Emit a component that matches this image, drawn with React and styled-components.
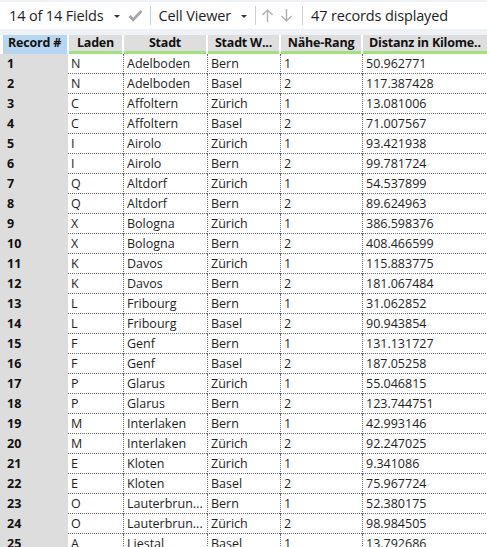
import React from "react";
import styled, { createGlobalStyle } from "styled-components";

const rows = [
  ["1", "N", "Adelboden", "Bern", "1", "50.962771"],
  ["2", "N", "Adelboden", "Basel", "2", "117.387428"],
  ["3", "C", "Affoltern", "Zürich", "1", "13.081006"],
  ["4", "C", "Affoltern", "Basel", "2", "71.007567"],
  ["5", "I", "Airolo", "Zürich", "1", "93.421938"],
  ["6", "I", "Airolo", "Bern", "2", "99.781724"],
  ["7", "Q", "Altdorf", "Zürich", "1", "54.537899"],
  ["8", "Q", "Altdorf", "Bern", "2", "89.624963"],
  ["9", "X", "Bologna", "Zürich", "1", "386.598376"],
  ["10", "X", "Bologna", "Bern", "2", "408.466599"],
  ["11", "K", "Davos", "Zürich", "1", "115.883775"],
  ["12", "K", "Davos", "Bern", "2", "181.067484"],
  ["13", "L", "Fribourg", "Bern", "1", "31.062852"],
  ["14", "L", "Fribourg", "Basel", "2", "90.943854"],
  ["15", "F", "Genf", "Bern", "1", "131.131727"],
  ["16", "F", "Genf", "Basel", "2", "187.05258"],
  ["17", "P", "Glarus", "Zürich", "1", "55.046815"],
  ["18", "P", "Glarus", "Bern", "2", "123.744751"],
  ["19", "M", "Interlaken", "Bern", "1", "42.993146"],
  ["20", "M", "Interlaken", "Zürich", "2", "92.247025"],
  ["21", "E", "Kloten", "Zürich", "1", "9.341086"],
  ["22", "E", "Kloten", "Basel", "2", "75.967724"],
  ["23", "O", "Lauterbrun...", "Bern", "1", "52.380175"],
  ["24", "O", "Lauterbrun...", "Zürich", "2", "98.984505"],
  ["25", "A", "Liestal", "Basel", "1", "13.792686"],
];

// column widths in px, last one runs off the edge
const cols = [68, 55, 84, 73, 82, 140];
const headers = ["Record #", "Laden", "Stadt", "Stadt W...", "Nähe-Rang", "Distanz in Kilome.."];

const GlobalStyle = createGlobalStyle`
  html, body {
    margin: 0;
    padding: 0;
    height: 100%;
    overflow: hidden;
    background: #eef1f6;
  }
  body {
    font-family: "Open Sans", "Noto Sans", sans-serif;
    color: #1b1b1b;
  }
`;

export default function App() {
  return (
    <>
      <GlobalStyle />
      <Page>
        <Toolbar>
          <ToolText>14 of 14 Fields</ToolText>
          <Caret />
          <Check viewBox="0 0 16 14">
            <path d="M1.5 7.5 L5.5 11.5 L14.5 2" fill="none" stroke="#a6a6a6" strokeWidth="3" />
          </Check>
          <Divider />
          <ToolText>Cell Viewer</ToolText>
          <Caret />
          <Divider />
          <Arrow viewBox="0 0 14 16">
            <path d="M7 15 V2 M1.5 7.5 L7 2 L12.5 7.5" fill="none" stroke="#b4b4b4" strokeWidth="1.6" />
          </Arrow>
          <Arrow viewBox="0 0 14 16">
            <path d="M7 1 V14 M1.5 8.5 L7 14 L12.5 8.5" fill="none" stroke="#b4b4b4" strokeWidth="1.6" />
          </Arrow>
          <Divider />
          <ToolText>47 records displayed</ToolText>
        </Toolbar>

        <Grid>
          <HeaderRow>
            {headers.map((h, i) => (
              <HeadCell
                key={h}
                $w={cols[i]}
                $first={i === 0}
                $last={i === headers.length - 1}
              >
                {h}
              </HeadCell>
            ))}
          </HeaderRow>
          {rows.map((r) => (
            <Row key={r[0]}>
              <NumCell $w={cols[0]}>{r[0]}</NumCell>
              {r.slice(1).map((v, i) => (
                <Cell key={i} $w={cols[i + 1]}>
                  {v}
                </Cell>
              ))}
            </Row>
          ))}
        </Grid>
      </Page>
    </>
  );
}

const Page = styled.div`
  width: 487px;
  height: 547px;
  overflow: hidden;
  display: flex;
  flex-direction: column;
`;

const Toolbar = styled.div`
  flex-shrink: 0;
  margin-top: 2px;
  height: 27px;
  background: #ffffff;
  display: flex;
  align-items: center;
  padding-left: 9px;
`;

const ToolText = styled.span`
  font-family: "Open Sans", "Noto Sans", sans-serif;
  font-size: 14.5px;
  color: #1e1e1e;
  white-space: nowrap;
  letter-spacing: -0.15px;
`;

const Caret = styled.span`
  width: 0;
  height: 0;
  border-left: 3px solid transparent;
  border-right: 3px solid transparent;
  border-top: 3px solid #333;
  margin: 2px 8px 0 10px;
`;

const Check = styled.svg`
  width: 15px;
  height: 13px;
  margin-right: 7px;
`;

const Divider = styled.span`
  width: 1px;
  height: 19px;
  background: #cfcfcf;
  margin: 0 8px 0 0;
`;

const Arrow = styled.svg`
  width: 13px;
  height: 15px;
  margin: 0 9px 0 -3px;
  &:first-of-type {
    margin-left: 1px;
  }
`;

const Grid = styled.div`
  flex-shrink: 0;
  margin-top: 6px;
  display: flex;
  flex-direction: column;
  background: #ffffff;
  position: relative;
  &::before {
    content: "";
    position: absolute;
    left: 0;
    top: 0;
    bottom: 0;
    width: ${cols[0]}px;
    background: #dddddd;
    z-index: 0;
  }
`;

const HeaderRow = styled.div`
  display: flex;
  height: 19px;
  background: #ffffff;
  position: relative;
  z-index: 1;
`;

const HeadCell = styled.div`
  flex: 0 0 ${(p) => p.$w - 2}px;
  margin: 0 1px;
  box-sizing: border-box;
  height: 19px;
  background: ${(p) => (p.$first ? "#b7d6f1" : "#dedede")};
  border-bottom: 3px solid ${(p) => (p.$first ? "#b7d6f1" : "#a3e07f")};
  font-size: 12.5px;
  font-weight: 700;
  line-height: 16px;
  text-align: ${(p) => (p.$first || p.$last ? "left" : "center")};
  padding-left: ${(p) => (p.$first ? "5px" : p.$last ? "6px" : "0")};
  white-space: nowrap;
  overflow: hidden;
  color: #111;
  letter-spacing: -0.2px;
  &:first-child {
    margin-left: 3px;
    flex-basis: ${(p) => p.$w - 4}px;
  }
`;

const Row = styled.div`
  display: flex;
  height: 20px;
  position: relative;
  z-index: 1;
`;

const NumCell = styled.div`
  flex: 0 0 ${(p) => p.$w}px;
  box-sizing: border-box;
  padding-left: 7px;
  font-size: 12.5px;
  font-weight: 700;
  line-height: 19px;
  color: #111;
`;

const Cell = styled.div`
  flex: 0 0 ${(p) => p.$w}px;
  box-sizing: border-box;
  border-bottom: 1px dotted #6e6e6e;
  border-left: 1px dotted #6e6e6e;
  padding-left: 3px;
  font-size: 12.5px;
  line-height: 19px;
  white-space: nowrap;
  overflow: hidden;
  color: #1e1e1e;
  &:nth-child(2) {
    border-left: none;
    padding-left: 3px;
  }
`;
